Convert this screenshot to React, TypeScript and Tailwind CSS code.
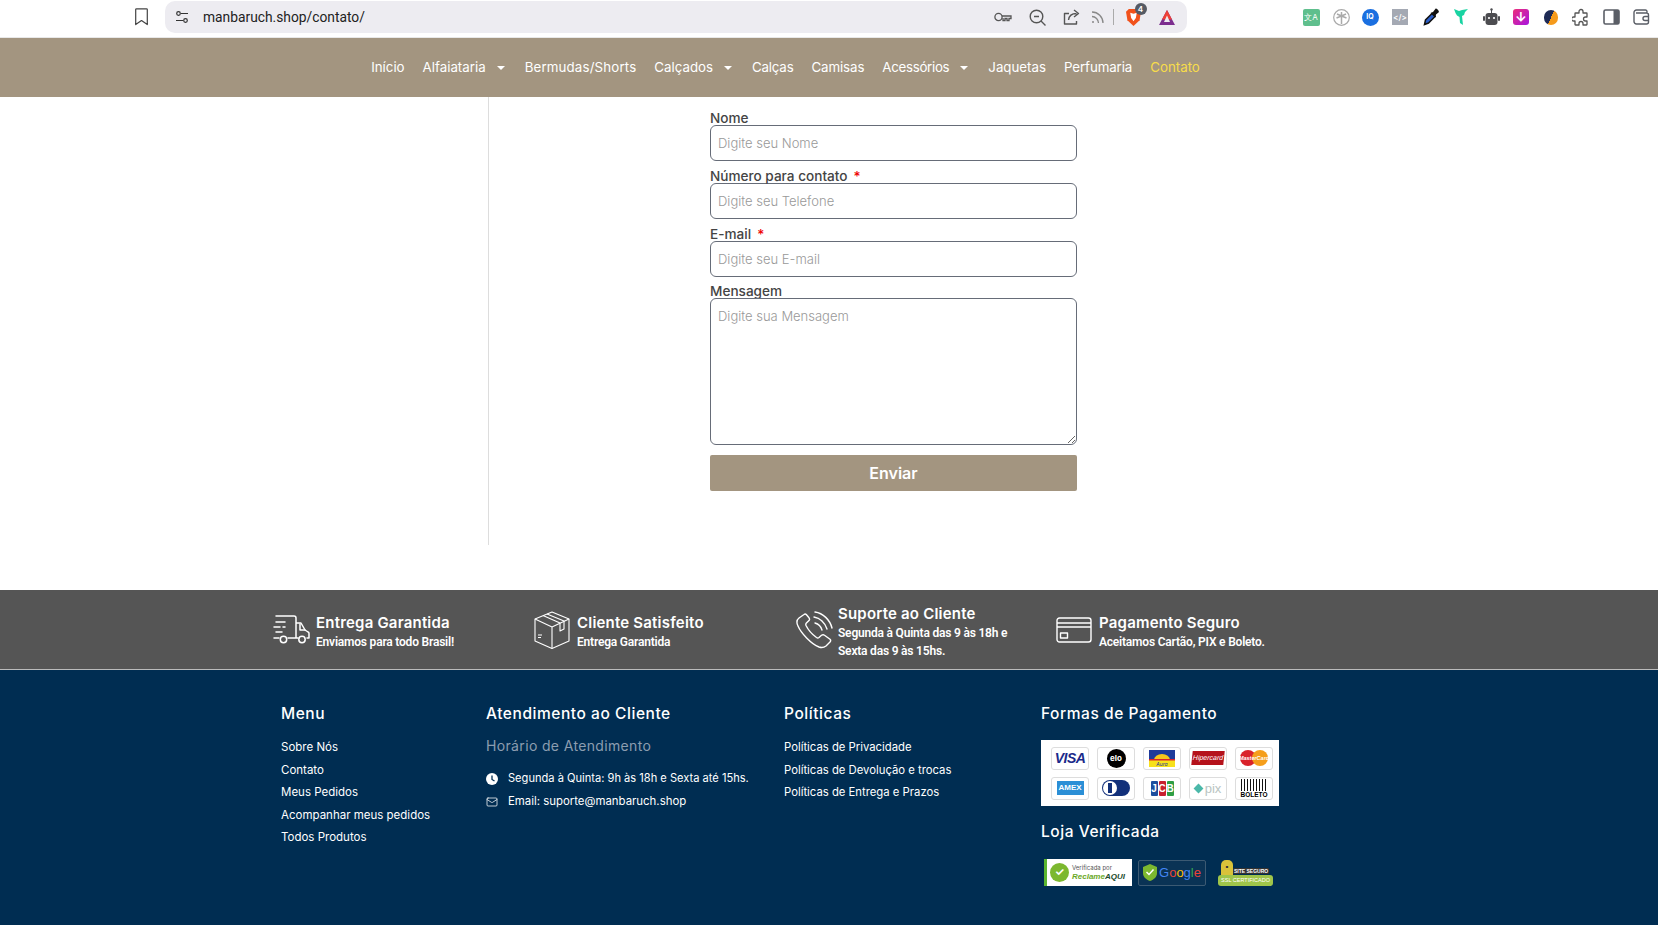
import React from "react";
import { Mail } from "lucide-react";

const mont = "font-['Inter','Noto_Sans',sans-serif]";

function Caret() {
  return <span className="mr-[2px] ml-[11px] inline-block h-0 w-0 border-x-[4px] border-t-[4px] border-x-transparent border-t-white" />;
}

function NavItem({ label, caret, gold, cls = "" }: { label: string; caret?: boolean; gold?: boolean; cls?: string }) {
  return (
    <a className={`flex items-center whitespace-nowrap ${gold ? "text-[#f7dc4a]" : "text-white"} ${cls}`}>
      {label}
      {caret && <Caret />}
    </a>
  );
}

function Field({ label, req, ph }: { label: string; req?: boolean; ph: string }) {
  return (
    <div>
      <label className="block h-[13px] text-[13.6px] leading-[15px] font-medium text-[#444]">
        {label}
        {req && <span className="ml-[6px] text-[#e00]">*</span>}
      </label>
      <input
        placeholder={ph}
        className="box-border mt-[1px] block h-[36px] w-full rounded-[6px] border border-[#666c78] bg-white px-[7px] text-[13px] font-light placeholder:text-[#999]"
      />
    </div>
  );
}

function Truck() {
  return (
    <svg width="37" height="32" viewBox="0 0 37 32" fill="none" stroke="white" strokeWidth="1.5" strokeLinecap="round" strokeLinejoin="round">
      <path d="M3 2h18a2 2 0 0 1 2 2v20H15M6 24H1M23 9h5l4 7 3 2a1.5 1.5 0 0 1 1 1.5V24h-2M23 24h2" />
      <path d="M3 8h9M1 13h6M10 13h2M3 18h6M27 10v6h5" />
      <circle cx="10.5" cy="25.5" r="3.2" />
      <circle cx="29" cy="25.5" r="3.2" />
    </svg>
  );
}

function Box() {
  return (
    <svg width="36" height="38" viewBox="0 0 36 38" fill="none" stroke="white" strokeWidth="1.1" strokeLinejoin="round">
      <path d="M18 1 35 8v22l-17 7.5L1 30V8z" />
      <path d="M1 8l17 8 17-8M18 16v21.5" />
      <path d="M9 4.5 26 12v8l4-2v-8L13 3" />
      <path d="M4 24h4M4 26.5h3" />
    </svg>
  );
}

function Phone() {
  return (
    <svg width="38" height="38" viewBox="0 0 38 38" fill="none" stroke="white" strokeWidth="1.4" strokeLinecap="round" strokeLinejoin="round">
      <path d="M9 3.5 4 7c-2.5 2-2.5 5-1 8 3 7 13 18 21 21 3 1 5 .5 7-1l4-4c.8-1 .8-2 0-2.7l-5.5-4c-1-.8-2-.7-3 0l-2.5 2.2c-.8.6-1.6.6-2.5 0C18 24 13 18.5 11 14.5c-.4-1-.3-1.7.4-2.4l2.6-2.5c.7-.8.7-1.8 0-2.8L11.5 3.8c-.7-.8-1.6-1-2.5-.3z" />
      <path d="M19 6c6 1 11 6 13 12M20 12c3 .8 6 3.5 7 7M20 1c8 1 15 8 17 16" />
    </svg>
  );
}

function Card() {
  return (
    <svg width="36" height="26" viewBox="0 0 36 26" fill="none" stroke="white" strokeWidth="1.4" strokeLinejoin="round">
      <rect x="1" y="1" width="34" height="24" rx="2.5" />
      <path d="M1 6h34M1 10h34" />
      <rect x="4.5" y="16" width="7" height="5" />
    </svg>
  );
}

function Feature({ icon, title, lines }: { icon: React.ReactNode; title: string; lines: string[] }) {
  return (
    <div className="flex w-[261px] items-center">
      <div className="flex w-[43px] shrink-0 justify-start">{icon}</div>
      <div className="pt-[5px] text-white">
        <div className="text-[15px] leading-[20px] font-semibold tracking-[0.2px]">{title}</div>
        {lines.map((l) => (
          <div key={l} className="font-['Roboto',sans-serif] text-[12px] leading-[18.5px] font-semibold tracking-[-0.2px]">
            {l}
          </div>
        ))}
      </div>
    </div>
  );
}

function Tile({ children }: { children?: React.ReactNode }) {
  return (
    <div className="flex h-[23px] w-[38px] items-center justify-center overflow-hidden rounded-[3px] border border-[#ddd] bg-white">
      {children}
    </div>
  );
}

function Slot({ w, children }: { w: string; children: React.ReactNode }) {
  return <div className={`flex items-center justify-center ${w}`}>{children}</div>;
}

function FooterHead({ children }: { children: React.ReactNode }) {
  return <h3 className="text-[15.5px] leading-[20px] font-medium tracking-[0.55px]">{children}</h3>;
}

export default function App() {
  return (
    <div className={`h-[925px] w-[1658px] overflow-hidden bg-white ${mont}`}>
      {/* browser bar */}
      <div className="flex h-[38px] items-start border-b border-[#e8e8e8] bg-white">
        <div className="flex h-[34px] w-[165px] items-center pl-[135px]">
          <svg width="13" height="18" viewBox="0 0 13 18" fill="none" stroke="#444" strokeWidth="1.2" strokeLinejoin="round">
            <path d="M1.5.8h10a.8.8 0 0 1 .8.8v15l-5.8-4-5.8 4v-15a.8.8 0 0 1 .8-.8z" />
          </svg>
        </div>
        <div className="mt-[1px] flex h-[32px] w-[1022px] items-center rounded-[10px] bg-[#edecf1] pl-[10px]">
          <svg width="14" height="14" viewBox="0 0 14 14" fill="none" stroke="#333" strokeWidth="1.2">
            <circle cx="3.5" cy="3.5" r="1.8" />
            <circle cx="10.5" cy="10.5" r="1.8" />
            <path d="M6 3.5h7M1 10.5h7" />
          </svg>
          <span className="ml-[14px] font-['Roboto',sans-serif] text-[13.8px] text-[#222]">manbaruch.shop/contato/</span>
          <div className="ml-auto flex items-center text-[#555]">
            <Slot w="w-[34px]">
              <svg width="18" height="10" viewBox="0 0 18 10" fill="none" stroke="#555" strokeWidth="1.3">
                <circle cx="4.5" cy="5" r="3.6" />
                <path d="M8 4h9v2.5h-2v2h-2v-2h-2v2H9V6" />
              </svg>
            </Slot>
            <Slot w="w-[34px]">
              <svg width="17" height="17" viewBox="0 0 17 17" fill="none" stroke="#555" strokeWidth="1.4">
                <circle cx="7.5" cy="7.5" r="6.3" />
                <path d="M12 12l4.5 4.5M5 7.5h5" />
              </svg>
            </Slot>
            <Slot w="w-[34px]">
              <svg width="17" height="16" viewBox="0 0 17 16" fill="none" stroke="#555" strokeWidth="1.4" strokeLinejoin="round">
                <path d="M6 4.5H1.500V15h12v-3" />
                <path d="M5.5 11c.5-4 3.5-6.500 8-6.500M11 1l4.500 3.500L11 8" />
              </svg>
            </Slot>
            <Slot w="w-[18px]">
              <svg width="13" height="13" viewBox="0 0 13 13" fill="none" stroke="#888" strokeWidth="1.3">
                <path d="M1 1c6 0 11 5 11 11M1 5.5c3.5 0 6.5 3 6.5 6.5" />
                <circle cx="2" cy="11" r="1" fill="#888" stroke="none" />
              </svg>
            </Slot>
            <Slot w="w-[14px]"><span className="h-[16px] w-px bg-[#aaa]" /></Slot>
            <Slot w="w-[26px]">
              <div className="relative">
                <svg width="15" height="18" viewBox="0 0 16 19" className="block">
                  <path d="M3 1h10l3 3-1.500 9L8 19 1.500 13 0 4z" fill="#f1511b" />
                  <path d="M4.5 5 8 6l3.5-1-1 5.500L8 14l-2.500-3.500z" fill="#fff" />
                </svg>
                <span className="absolute -top-[5px] left-[9px] flex h-[12px] w-[12px] items-center justify-center rounded-full bg-[#555a64] text-[8px] font-semibold text-white">4</span>
              </div>
            </Slot>
            <Slot w="w-[41px]">
              <svg width="18" height="17" viewBox="0 0 18 17" fill="none">
                <path d="M9 1 17 16H1z" fill="#7c2d8f" />
                <path d="M9 1 14 10.5H4z" fill="#ef4136" />
                <path d="M9 6.5 12 13H6z" fill="#edecf1" />
              </svg>
            </Slot>
          </div>
        </div>
        <div className="flex h-[34px] flex-1 items-center pl-[109px]">
          <Slot w="w-[30px]">
            <span className="flex h-[17px] w-[17px] items-center justify-center rounded-[2px] bg-[#5fbf8d] text-[8px] leading-none text-white">文A</span>
          </Slot>
          <Slot w="w-[30px]">
            <svg width="17" height="17" viewBox="0 0 17 17" fill="none" stroke="#aaa">
              <circle cx="8.5" cy="8.5" r="7.8" strokeWidth="1.2" />
              <path d="M8.5 7v8M8.5 7 4 5M8.5 7l4.500-2M8.5 7 3.500 9M8.5 7l5 2M8.5 7V3" strokeWidth="1.5" />
            </svg>
          </Slot>
          <Slot w="w-[28px]">
            <span className="flex h-[17px] w-[17px] items-center justify-center rounded-full bg-[#1a6fe0] text-[7px] font-bold text-white">IQ</span>
          </Slot>
          <Slot w="w-[32px]">
            <span className="flex h-[16px] w-[16px] items-center justify-center bg-[#a4a9b3] text-[8px] font-semibold text-white">&lt;/&gt;</span>
          </Slot>
          <Slot w="w-[30px]">
            <svg width="17" height="18" viewBox="0 0 17 18">
              <path d="M1.5 16.5 2.500 12 9 5.500l3 3L5.500 15z" fill="#2a5ec9" stroke="#111" strokeWidth="1.5" />
              <path d="M7.500 5 10 4l2.500-3.300c1-.6 4 2.400 3.300 3.500L13 6.500 12.500 9.500z" fill="#111" />
            </svg>
          </Slot>
          <Slot w="w-[30px]">
            <svg width="16" height="18" viewBox="0 0 16 18" fill="#19d3a2">
              <path d="M1 1l5 2 3-1 6-1-3 3-1 3-2 1 1 9-3-2-.5-6L4 7.5 2.500 5z" />
            </svg>
          </Slot>
          <Slot w="w-[30px]">
            <svg width="17" height="18" viewBox="0 0 17 18" fill="#4c4c50">
              <rect x="2.5" y="5" width="12" height="12" rx="3" />
              <rect x="0" y="8" width="2" height="5" rx="1" />
              <rect x="15" y="8" width="2" height="5" rx="1" />
              <rect x="8" y="1.5" width="1" height="4" />
              <circle cx="8.5" cy="1.5" r="1.2" />
              <circle cx="6" cy="10" r="1.1" fill="#fff" />
              <circle cx="11" cy="10" r="1.1" fill="#fff" />
            </svg>
          </Slot>
          <Slot w="w-[30px]">
            <span className="flex h-[16px] w-[16px] items-center justify-center rounded-[3px] bg-[linear-gradient(135deg,#ec2f7a,#a714e0)] text-[13px] font-bold leading-none text-white">↓</span>
          </Slot>
          <Slot w="w-[30px]">
            <span className="h-[15px] w-[14px] rounded-full bg-[linear-gradient(115deg,#1e2a55_50%,#f59a1b_50%)]" />
          </Slot>
          <Slot w="w-[30px]">
            <svg width="18" height="18" viewBox="0 0 18 18" fill="none" stroke="#555" strokeWidth="1.3" strokeLinejoin="round">
              <path d="M7 3.500a2 2 0 1 1 4 0V5h3.500a.5.5 0 0 1 .5.5V9h-1.500a2 2 0 1 0 0 4H15v3.500a.5.5 0 0 1-.5.5H11v-1.500a2 2 0 1 0-4 0V17H3.500a.5.5 0 0 1-.5-.5V13H1.500a2 2 0 1 1 0-4H3V5.500a.5.5 0 0 1 .5-.5H7z" />
            </svg>
          </Slot>
          <Slot w="w-[30px]">
            <svg width="17" height="16" viewBox="0 0 17 16">
              <rect x="1" y="1" width="15" height="14" rx="1.5" fill="none" stroke="#5a5e66" strokeWidth="1.6" />
              <rect x="10.5" y="1" width="5.5" height="14" fill="#5a5e66" />
            </svg>
          </Slot>
          <Slot w="w-[30px]">
            <svg width="17" height="16" viewBox="0 0 17 16" fill="none" stroke="#5a5e66" strokeWidth="1.4">
              <path d="M14 4V2.500A1.500 1.500 0 0 0 12.500 1h-9A2.500 2.500 0 0 0 1 3.500v9A2.500 2.500 0 0 0 3.500 15h10a2 2 0 0 0 2-2V6a2 2 0 0 0-2-2H3" />
              <path d="M16 7.500h-4a2 2 0 0 0 0 4h4" />
            </svg>
          </Slot>
        </div>
      </div>

      {/* nav */}
      <nav className="flex h-[59px] items-center justify-center gap-[18px] bg-[#a39580] pr-[87px] text-[13.3px]">
        <NavItem label="Início" />
        <NavItem label="Alfaiataria" caret />
        <NavItem label="Bermudas/Shorts" cls="tracking-[0.15px]" />
        <NavItem label="Calçados" caret />
        <NavItem label="Calças" cls="tracking-[-0.2px]" />
        <NavItem label="Camisas" cls="tracking-[-0.1px]" />
        <NavItem label="Acessórios" caret cls="tracking-[-0.3px]" />
        <NavItem label="Jaquetas" />
        <NavItem label="Perfumaria" cls="tracking-[-0.1px]" />
        <NavItem label="Contato" gold />
      </nav>

      {/* body */}
      <main className="flex h-[493px]">
        <div className="h-[448px] w-[489px] border-r border-[#ddd]" />
        <form className="ml-[221px] flex w-[367px] flex-col pt-[14px]">
          <div className="flex flex-col gap-[8px]">
            <Field label="Nome" ph="Digite seu Nome" />
            <Field label="Número para contato" req ph="Digite seu Telefone" />
            <Field label="E-mail" req ph="Digite seu E-mail" />
          </div>
          <label className="mt-[7px] block h-[13px] text-[13.6px] leading-[15px] font-medium text-[#444]">Mensagem</label>
          <textarea
            placeholder="Digite sua Mensagem"
            className="mt-[1px] block h-[147px] w-full rounded-[6px] border border-[#666c78] bg-white px-[7px] py-[8px] text-[13px] font-light placeholder:text-[#999]"
          />
          <button type="button" className="mt-[10px] h-[36px] w-full rounded-[2px] bg-[#a39580] text-[16px] font-semibold text-white">
            Enviar
          </button>
        </form>
      </main>

      {/* features */}
      <section className="flex h-[80px] items-center border-b border-[#bbb] bg-[#555555] pl-[273px]">
        <Feature icon={<Truck />} title="Entrega Garantida" lines={["Enviamos para todo Brasil!"]} />
        <Feature icon={<Box />} title="Cliente Satisfeito" lines={["Entrega Garantida"]} />
        <Feature icon={<Phone />} title="Suporte ao Cliente" lines={["Segunda à Quinta das 9 às 18h e", "Sexta das 9 às 15hs."]} />
        <Feature icon={<Card />} title="Pagamento Seguro" lines={["Aceitamos Cartão, PIX e Boleto."]} />
      </section>

      {/* footer */}
      <footer className="flex h-[255px] bg-[#002d52] pl-[281px] pt-[34px] text-white">
        <div className="w-[205px]">
          <FooterHead>Menu</FooterHead>
          <ul className="mt-[12px] flex flex-col text-[11.5px] leading-[22.5px]">
            <li>Sobre Nós</li>
            <li>Contato</li>
            <li>Meus Pedidos</li>
            <li>Acompanhar meus pedidos</li>
            <li>Todos Produtos</li>
          </ul>
        </div>
        <div className="w-[298px]">
          <FooterHead>Atendimento ao Cliente</FooterHead>
          <div className="mt-[12px] text-[14px] leading-[20px] tracking-[0.35px] text-[#8c9db0]">Horário de Atendimento</div>
          <div className="mt-[11px] flex items-center text-[11.1px] leading-[23px]">
            <svg width="12" height="12" viewBox="0 0 12 12" className="mr-[10px] shrink-0">
              <circle cx="6" cy="6" r="6" fill="white" />
              <path d="M6 2.5V6.5L8.5 8" stroke="#002d52" strokeWidth="1.3" fill="none" />
            </svg>
            Segunda à Quinta: 9h às 18h e Sexta até 15hs.
          </div>
          <div className="flex items-center text-[11.4px] leading-[23px]">
            <Mail size={12} strokeWidth={1.5} className="mr-[10px] shrink-0" />
            Email: suporte@manbaruch.shop
          </div>
        </div>
        <div className="w-[257px]">
          <FooterHead>Políticas</FooterHead>
          <ul className="mt-[12px] flex flex-col text-[11.3px] leading-[22.5px]">
            <li>Políticas de Privacidade</li>
            <li>Políticas de Devolução e trocas</li>
            <li>Políticas de Entrega e Prazos</li>
          </ul>
        </div>
        <div className="w-[238px]">
          <FooterHead>Formas de Pagamento</FooterHead>
          <div className="mt-[16px] grid h-[66px] w-[238px] grid-cols-[repeat(5,38px)] content-center gap-x-[8px] gap-y-[7px] bg-white pl-[10px]">
            <Tile><span className="font-['Liberation_Sans',sans-serif] text-[14px] font-bold italic tracking-[-0.5px] text-[#1a2a8a]">VISA</span></Tile>
            <Tile><span className="flex h-[19px] w-[19px] items-center justify-center rounded-full bg-black text-[8px] font-bold text-white">elo</span></Tile>
            <Tile>
              <svg width="26" height="17" viewBox="0 0 26 17">
                <rect width="26" height="10" fill="#1e3a9a" />
                <rect y="10" width="26" height="7" fill="#f7e11b" />
                <path d="M5 10a8 6 0 0 1 16 0z" fill="#f7c51b" />
                <rect y="9" width="26" height="1.5" fill="#d9222a" />
                <text x="13" y="15.5" fontSize="5" textAnchor="middle" fill="#1e3a9a" fontStyle="italic">Aura</text>
              </svg>
            </Tile>
            <Tile><span className="flex h-[14px] w-[32px] -skew-x-6 items-center justify-center bg-[#b5121b] font-['Liberation_Sans',sans-serif] text-[7px] italic text-white">Hipercard</span></Tile>
            <Tile>
              <span className="relative flex w-[28px]">
                <span className="h-[16px] w-[16px] rounded-full bg-[#d9222a]" />
                <span className="-ml-[4px] h-[16px] w-[16px] rounded-full bg-[#f59e1b]" />
                <span className="absolute inset-0 flex items-center justify-center font-['Liberation_Sans',sans-serif] text-[5.5px] font-bold italic text-white">MasterCard</span>
              </span>
            </Tile>
            <Tile><span className="flex h-[14px] w-[27px] items-center justify-center border border-[#2b8fd6] bg-[#2b8fd6] font-['Liberation_Sans',sans-serif] text-[8px] font-bold text-white">AMEX</span></Tile>
            <Tile>
              <span className="relative flex h-[16px] w-[28px] items-center rounded-full bg-[#12307a] pl-[1px]">
                <span className="flex h-[14px] w-[14px] items-center justify-center rounded-full bg-white"><span className="h-[10px] w-[4px] bg-[#12307a]" /></span>
              </span>
            </Tile>
            <Tile>
              <span className="flex gap-px font-['Liberation_Sans',sans-serif] text-[10px] font-bold leading-[15px] text-white">
                <span className="w-[7px] rounded-[1px] bg-[#1d4e9e] text-center">J</span>
                <span className="w-[7px] rounded-[1px] bg-[#c8202f] text-center">C</span>
                <span className="w-[7px] rounded-[1px] bg-[#2f9e44] text-center">B</span>
              </span>
            </Tile>
            <Tile>
              <span className="h-[7px] w-[7px] rotate-45 bg-[#4bb8a9]" />
              <span className="ml-[3px] font-['Liberation_Sans',sans-serif] text-[13px] leading-none text-[#b9c4c2]">pix</span>
            </Tile>
            <Tile>
              <span className="flex flex-col items-center">
                <span className="h-[12px] w-[26px] bg-[repeating-linear-gradient(90deg,#111_0_1.5px,#fff_1.5px_3px)]" />
                <span className="font-['Liberation_Sans',sans-serif] text-[6.5px] leading-[7px] font-bold text-black">BOLETO</span>
              </span>
            </Tile>
          </div>
          <div className="mt-[16px]"><FooterHead>Loja Verificada</FooterHead></div>
          <div className="mt-[17px] flex items-center">
            <div className="ml-[3px] flex h-[27px] w-[88px] items-center overflow-hidden border-l-[3px] border-[#5bb531] bg-white pl-[3px]">
              <span className="flex h-[19px] w-[19px] shrink-0 items-center justify-center rounded-full bg-[#7cb82f] text-[11px] font-bold text-white">✓</span>
              <span className="ml-[3px] flex flex-col whitespace-nowrap text-[6px] leading-[9px] text-[#555]">
                Verificada por
                <b className="font-['Liberation_Sans',sans-serif] text-[8px] leading-[10px] text-[#6aa81f] italic">Reclame<span className="text-[#1a4a2a]">AQUI</span></b>
              </span>
            </div>
            <div className="ml-[6px] flex h-[26px] w-[68px] items-center justify-center rounded-[2px] border border-[#3c5a73] bg-[#0a3355]">
              <svg width="14" height="17" viewBox="0 0 14 17" className="mr-[2px]">
                <path d="M7 0 14 3v6c0 4-3 6.5-7 8-4-1.5-7-4-7-8V3z" fill="#7cb82f" />
                <path d="M3.5 8l2.5 2.5 4.5-5" stroke="white" strokeWidth="1.5" fill="none" />
              </svg>
              <span className="font-['Liberation_Sans',sans-serif] text-[13px]">
                <span className="text-[#4285f4]">G</span><span className="text-[#ea4335]">o</span><span className="text-[#fbbc05]">o</span><span className="text-[#4285f4]">g</span><span className="text-[#34a853]">l</span><span className="text-[#ea4335]">e</span>
              </span>
            </div>
            <div className="ml-[12px] flex w-[55px] flex-col">
              <div className="flex items-end">
                <span className="relative ml-[3px] flex h-[15px] w-[12px] items-center justify-center rounded-t-[5px] bg-[#d9c23a] text-[7px] text-[#333]">▪</span>
                <span className="mb-[1px] whitespace-nowrap rounded-[1px] bg-[#333] px-px font-['Liberation_Sans',sans-serif] text-[5px] leading-[6px] font-bold text-white">SITE SEGURO</span>
              </div>
              <span className="overflow-hidden rounded-[3px] bg-[#9fc54a] text-center font-['Liberation_Sans',sans-serif] text-[5.5px] leading-[11px] whitespace-nowrap text-white">SSL CERTIFICADO</span>
            </div>
          </div>
        </div>
      </footer>
    </div>
  );
}
